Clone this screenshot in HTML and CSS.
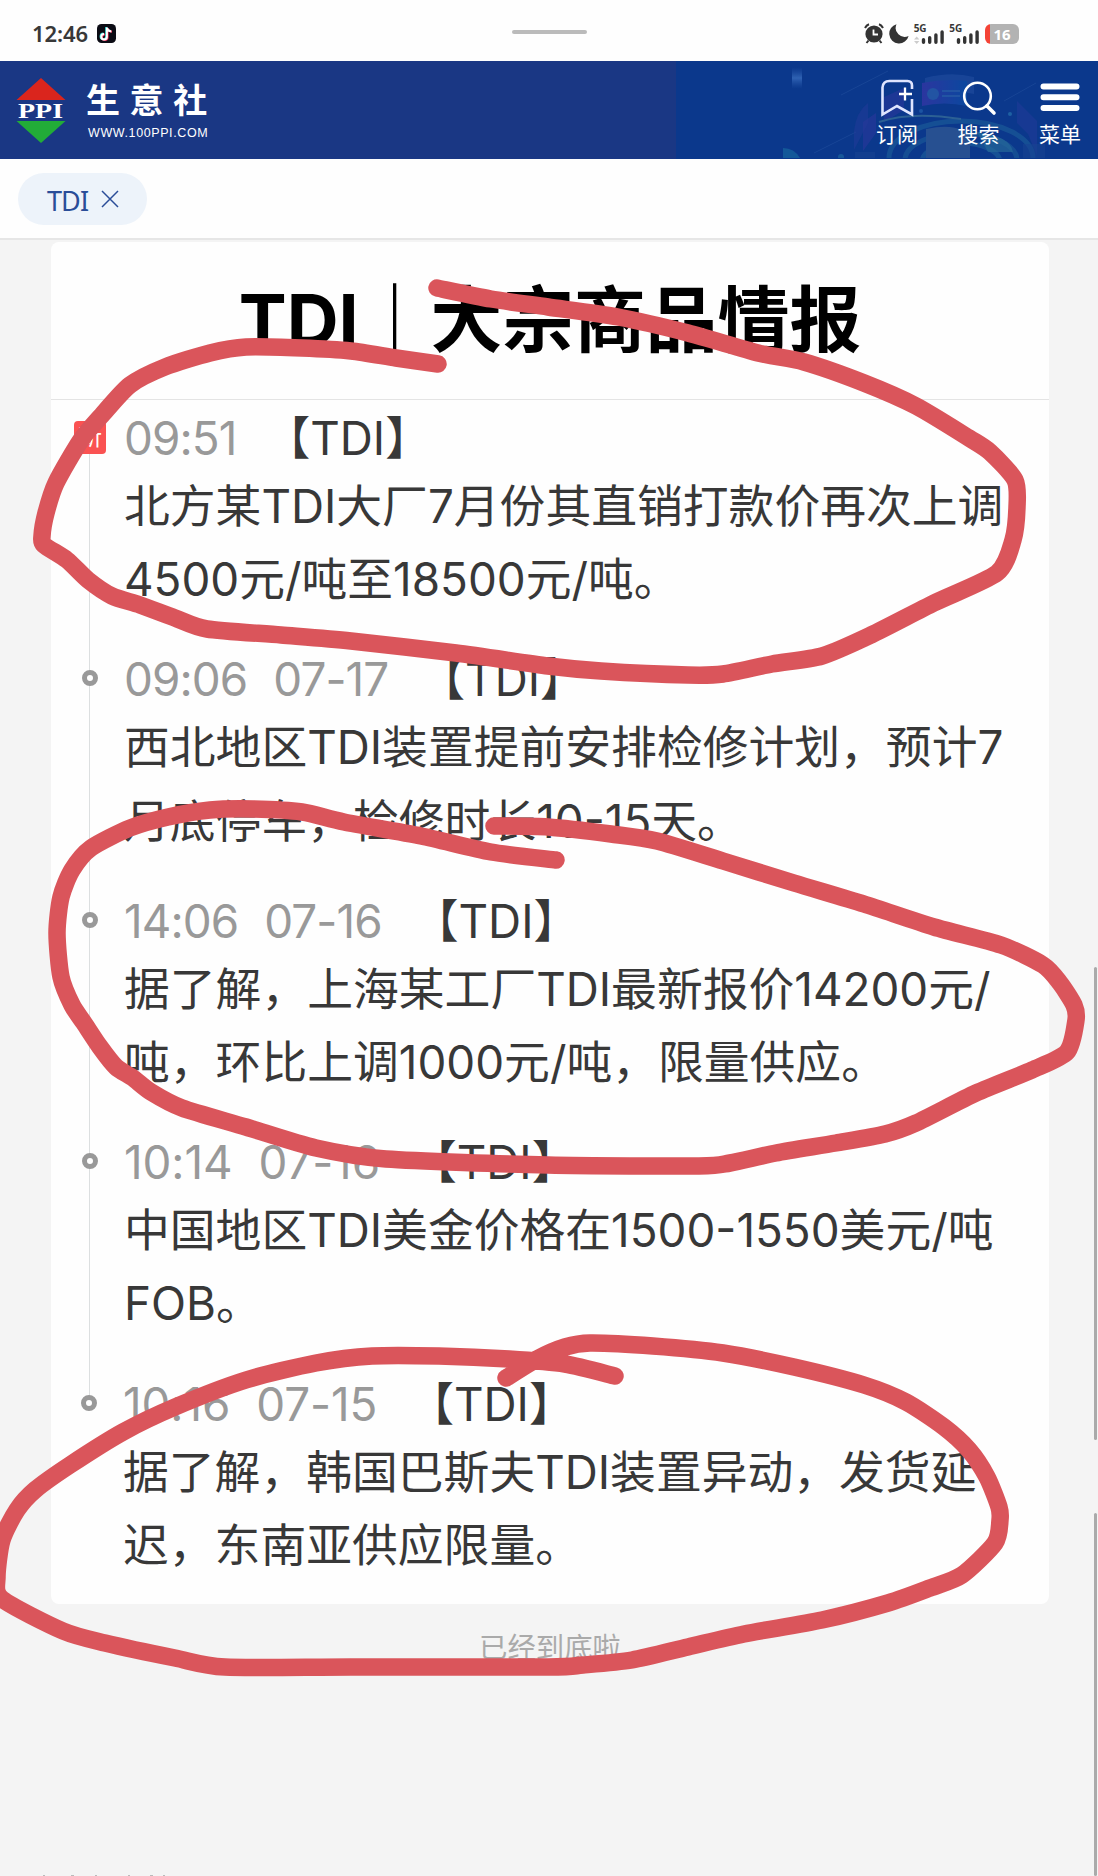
FILE: index.html
```
<!DOCTYPE html>
<html lang="zh-CN">

<head>
    <meta charset="UTF-8" />
    <meta name="viewport" content="width=device-width, initial-scale=1.0" />
    <title>TDI｜大宗商品情报</title>

    <link rel="stylesheet" href="styles.css">
</head>

<body>
    <div class="status-bar">
        <div class="status-left">
            <span class="clock">12:46</span>
            <svg class="app-icon" width="19" height="19" viewBox="0 0 19 19">
                <rect width="19" height="19" rx="4.5" fill="#0b0b14" />
                <g fill="none" stroke-width="2">
                    <path d="M9.200 3v9.400a2.800 2.800 0 1 1-2.800-2.800M9.200 3.500q.6 3 4.400 3.400" stroke="#35e0dc" />
                    <path d="M10.600 4v9.200a2.800 2.800 0 1 1-2.800-2.800M10.600 4.400q.6 3 4.400 3.400" stroke="#f0305a" />
                    <path d="M9.900 3.400v9.400a2.800 2.800 0 1 1-2.800-2.800M9.900 4q.6 3 4.400 3.400" stroke="#fff" />
                </g>
            </svg>
        </div>
        <span class="handle"></span>
        <div class="status-right">
            <svg width="20" height="21" viewBox="0 0 20 21">
                <circle cx="10" cy="11" r="8.6" fill="#333" />
                <path d="M1 5Q2.500 2 5 1.200M19 5Q17.500 2 15 1.200M4.500 17.500l-2 2.500M15.500 17.500l2 2.500" fill="none" stroke="#333" stroke-width="2" />
                <path d="M9.500 6.500v5h4.500" fill="none" stroke="#fff" stroke-width="1.800" />
            </svg>
            <svg width="20" height="21" viewBox="0 0 20 21">
                <path d="M7.500 1.200A9.800 9.800 0 1 0 19.600 13A9 9 0 0 1 7.500 1.200Z" fill="#333" />
            </svg>
            <div class="signal">
                <b>5G</b>
                <svg width="31" height="20" viewBox="0 0 31 20">
                    <path d="M0 15.500l2.700-3 2.700 3zM0 17l2.700 3 2.700-3z" fill="#ccc" />
                    <path d="M9.500 18.300v-2.500M15.700 18.300v-4.500M21.900 18.300V11M28.100 18.300V8" stroke="#333" stroke-width="3.400" stroke-linecap="round" />
                </svg>
            </div>
            <div class="signal">
                <b>5G</b>
                <svg width="31" height="20" viewBox="0 0 31 20">
                    <path d="M9.500 18.300v-2.500M15.700 18.300v-4.500M21.900 18.300V11M28.100 18.300V8" stroke="#333" stroke-width="3.400" stroke-linecap="round" />
                </svg>
            </div>
            <div class="battery">16</div>
        </div>
    </div>

    <header class="header">
        <div class="logo">
            <svg width="50" height="66" viewBox="0 0 50 66">
                <path d="M25 0L49.500 22H.5z" fill="#da251d" />
                <path d="M25 65L49.500 43H.5z" fill="#22ac38" />
                <text x="2" y="40" class="logo-ppi" textLength="45" lengthAdjust="spacingAndGlyphs">PPI</text>
            </svg>
            <div class="logo-text">
                <strong>生意社</strong>
                <span>WWW.100PPI.COM</span>
            </div>
        </div>
        <div class="header-right">
            <svg class="header-art" width="422" height="97" viewBox="0 0 422 97">
                <defs>
                    <linearGradient id="panel" x1="0" x2="1">
                        <stop offset="0" stop-color="#3a35a8" />
                        <stop offset="1" stop-color="#0b4fa8" />
                    </linearGradient>
                    <linearGradient id="glow" x1="0" y1="0" x2="0" y2="1">
                        <stop offset="0" stop-color="#2a5cb0" stop-opacity="0" />
                        <stop offset=".5" stop-color="#3f74c4" />
                        <stop offset="1" stop-color="#2a5cb0" stop-opacity="0" />
                    </linearGradient>
                </defs>
                <rect x="116" y="6" width="10" height="22" fill="url(#glow)" />
                <path d="M165 34L212 10M138 92L180 71M328 40L360 22" stroke="#2a56a4" stroke-opacity=".6" />
                <path d="M107 97V87a20 20 0 0 1 17 10z" fill="#17669f" />
                <path d="M249 17Q275 10 298 16V33Q272 27 249 33z" fill="#1e4a9c" />
                <path d="M246 22Q270 17 291 20V45Q268 40 246 45z" fill="url(#panel)" />
                <circle cx="257" cy="33" r="6" fill="#2c60ad" />
                <path d="M266 30h18M266 35h18" stroke="#2c60ad" stroke-width="2" />
                <path d="M208 36l20-9v22l-20 12zM187 61l13-9v20l-13 18z" fill="#32379f" opacity=".7" />
                <path d="M178 89V70Q180 51 192 42V62zM341 40l20 20v35l-9-22-11-11z" fill="#303c9f" opacity=".5" />
                <g fill="none" stroke="#246b9e" stroke-width="5">
                    <ellipse cx="285" cy="97" rx="72" ry="37" stroke-opacity=".65" />
                    <ellipse cx="285" cy="99" rx="56" ry="27" stroke-opacity=".6" />
                    <ellipse cx="285" cy="101" rx="39" ry="19" stroke-opacity=".7" />
                </g>
                <path d="M250 68q35-7 44 9v20h-44z" fill="#335b94" />
                <path d="M301 71q33 4 36 20h-25z" fill="#307da0" opacity=".7" />
                <path d="M203 61Q235 50 285 58" fill="none" stroke="#3a7198" stroke-width="2" />
                <circle cx="245" cy="50" r="2" fill="#235fac" />
                <circle cx="334" cy="53" r="2" fill="#2672ad" />
                <circle cx="165" cy="96" r="3" fill="#1d659f" />
                <path d="M179 91h20v6h-20zM347 83h22v14h-22z" fill="#1e4894" opacity=".6" />
            </svg>
            <nav class="nav">
                <a class="nav-item">
                    <svg width="40" height="40" viewBox="0 0 40 40">
                        <path d="M35 11V7.500Q35 3 30.500 3H12.500Q6 3 5.500 9.500V36.500L20 28l15 8.500V21" fill="none" stroke="#dfe5ff" stroke-width="2.600" />
                        <path d="M28 9.500v13M22 16h13" stroke="#fff" stroke-width="2.300" />
                    </svg>
                    <span>订阅</span>
                </a>
                <a class="nav-item">
                    <svg width="40" height="40" viewBox="0 0 40 40">
                        <circle cx="18.500" cy="18" r="13.300" fill="none" stroke="#fff" stroke-width="2.600" />
                        <path d="M28 28l7 7" stroke="#fff" stroke-width="3.600" stroke-linecap="round" />
                    </svg>
                    <span>搜索</span>
                </a>
                <a class="nav-item">
                    <svg width="40" height="40" viewBox="0 0 40 40">
                        <path d="M3.500 8.500h33M3.500 19.300h33M3.500 30h33" stroke="#fff" stroke-width="6" stroke-linecap="round" />
                    </svg>
                    <span>菜单</span>
                </a>
            </nav>
        </div>
    </header>

    <div class="filter-bar">
        <div class="chip">
            TDI
            <svg width="18" height="18" viewBox="0 0 18 18">
                <path d="M1 1l16 16M17 1L1 17" stroke="#2a4d98" stroke-width="1.500" />
            </svg>
        </div>
    </div>

    <main class="card">
        <h1>TDI｜大宗商品情报</h1>
        <ul class="timeline">
            <li class="item">
                <i class="badge-new">新</i>
                <div class="meta"><time>09:51</time><span>【TDI】</span></div>
                <p>北方某TDI大厂7月份其直销打款价再次上调<br>4500元/吨至18500元/吨。</p>
            </li>
            <li class="item">
                <i class="dot"></i>
                <div class="meta"><time>09:06</time><time>07-17</time><span>【TDI】</span></div>
                <p>西北地区TDI装置提前安排检修计划，预计7<br>月底停车，检修时长10-15天。</p>
            </li>
            <li class="item">
                <i class="dot"></i>
                <div class="meta"><time>14:06</time><time>07-16</time><span>【TDI】</span></div>
                <p>据了解，上海某工厂TDI最新报价14200元/<br>吨，环比上调1000元/吨，限量供应。</p>
            </li>
            <li class="item">
                <i class="dot"></i>
                <div class="meta meta-wide"><time>10:14</time><time>07-16</time><span>【TDI】</span></div>
                <p>中国地区TDI美金价格在1500-1550美元/吨<br>FOB。</p>
            </li>
            <li class="item item-last">
                <i class="dot"></i>
                <div class="meta meta-wide"><time>10:16</time><time>07-15</time><span>【TDI】</span></div>
                <p>据了解，韩国巴斯夫TDI装置异动，发货延<br>迟，东南亚供应限量。</p>
            </li>
        </ul>
    </main>
    <p class="end">已经到底啦</p>

    <span class="scrollbar scrollbar-top"></span>
    <span class="scrollbar scrollbar-bottom"></span>

    <!-- top edge of the line cut off by the screen -->
    <svg class="cut-line" width="180" height="1" viewBox="0 0 180 1">
        <path d="M43 .5h2M71 .5h3M95 .5h2M128 .5h2M150 .5h3M163 .5h2" stroke="#bbb" />
    </svg>

    <!-- red pen marks -->
    <svg class="marks" width="1098" height="1876" viewBox="0 0 1098 1876">
        <path data-points="437,288 491,299 548,307 618,317 688,333 758,353 804,362 864,383 916,406 969,438 990,452 1015,480 1017,507 1013,540 997,573 934,603 871,635 822,656 772,664 723,674 688,675 601,671 548,666 456,653 351,641 281,635 207,629 175,618 140,605 112,596 88,580 67,560 44,545 42,536 46,513 56,483 81,440 102,415 130,385 165,367 210,353 246,347 302,348 351,351 396,358 438,364" />
        <path data-points="494,826 548,827 611,834 657,841 723,861 794,883 864,904 934,927 1001,945 1043,965 1060,983 1074,1005 1076,1020 1067,1052 1032,1070 976,1093 916,1123 885,1134 836,1143 776,1153 730,1163 699,1166 548,1165 386,1159 316,1148 246,1127 182,1108 151,1092 133,1078 116,1067 100,1047 84,1023 72,1005 61,977 57,933 61,897 72,870 91,848 130,828 168,817 210,810 253,809 302,812 344,822 421,836 491,852 556,860" />
        <path data-points="506,1378 537,1359 565,1347 590,1343 653,1346 723,1353 794,1367 864,1385 906,1402 944,1427 969,1450 987,1477 999,1507 1000,1520 995,1543 962,1575 930,1588 888,1603 822,1620 744,1634 688,1647 632,1660 583,1665 548,1667 351,1667 225,1667 175,1658 105,1643 63,1631 2,1599 -3,1577 2,1540 17,1510 35,1490 70,1465 123,1432 175,1407 246,1380 316,1363 372,1356 439,1356 509,1359 565,1364 615,1376" />
    </svg>

    <script>
        // draw every pen mark as a smooth curve through its points
        document.querySelectorAll(".marks path").forEach(function(path) {
            const p = path.dataset.points.split(" ").map(s => s.split(",").map(Number));
            let d = "M" + p[0];
            for (let i = 0; i < p.length - 1; i++) {
                const a = p[i - 1] || p[i];
                const b = p[i];
                const c = p[i + 1];
                const e = p[i + 2] || c;
                d += "C" + [b[0] + (c[0] - a[0]) / 8, b[1] + (c[1] - a[1]) / 8,
                    c[0] - (e[0] - b[0]) / 8, c[1] - (e[1] - b[1]) / 8, c[0], c[1]
                ].join(" ");
            }
            path.setAttribute("d", d);
        });
    </script>
</body>

</html>
```
FILE: styles.css
```
* {
    box-sizing: border-box;
}

body {
    position: relative;
    margin: 0;
    height: 1876px;
    overflow: hidden;
    background-color: #f4f4f4;
    color: #383838;
    font-family: Inter, "Noto Sans CJK SC", sans-serif;
}

svg {
    display: block;
}

.status-bar {
    display: grid;
    grid-template-columns: 1fr 75px 1fr;
    align-items: center;
    height: 61px;
    padding: 6px 79px 0 32px;
    background-color: #fefefe;
}

.status-left,
.status-right {
    display: flex;
    align-items: center;
}

.status-left {
    width: 480px;
    gap: 7px;
}

.clock {
    width: 58px;
    font: 600 22px/24px "Noto Sans", sans-serif;
    letter-spacing: -0.1px;
    white-space: nowrap;
    padding-bottom: 1px;
}

.handle {
    height: 4px;
    margin-bottom: 4px;
    border-radius: 2px;
    background-color: #bbb;
}

.status-right {
    justify-content: flex-end;
    gap: 4.7px;
}

.signal {
    position: relative;
    width: 31px;
}

.signal b {
    position: absolute;
    top: -2px;
    left: 0;
    font: 700 10px/12px "Noto Sans", sans-serif;
}

.battery {
    width: 34px;
    height: 20px;
    border-radius: 6px;
    background: linear-gradient(90deg, #f44336 5px, #b3b3b3 5px);
    color: #fff;
    font: 700 15px/20px "Noto Sans", sans-serif;
    text-align: center;
}

.header {
    display: flex;
    height: 98px;
    background-color: #1a3784;
}

.logo {
    display: flex;
    width: 676px;
    padding: 17px 0 0 16px;
    gap: 20px;
}

.logo-ppi {
    fill: #fff;
    font: 700 20px "Liberation Serif", serif;
}

.logo-text {
    color: #fff;
}

.logo-text strong {
    display: block;
    margin-top: 3px;
    font-size: 34px;
    font-weight: 700;
    line-height: 40px;
    letter-spacing: 9.6px;
}

.logo-text span {
    display: block;
    margin: 4px 0 0 2px;
    font: 12.5px/16px "Liberation Sans", sans-serif;
    letter-spacing: 0.6px;
}

.header-right {
    position: relative;
    flex: 1;
    background-color: #0b388c;
}

.header-art {
    position: absolute;
    top: 0;
    right: 0;
    opacity: 0.7;
}

.nav {
    position: relative;
    display: flex;
    justify-content: flex-end;
    gap: 31.5px;
    padding: 17px 13px 0 0;
}

.nav-item {
    display: flex;
    flex-direction: column;
    align-items: center;
    width: 50px;
    color: #fff;
    font-size: 21px;
    line-height: 34px;
    white-space: nowrap;
}

.filter-bar {
    height: 81px;
    padding: 14px 18px;
    border-bottom: 2px solid #e6e6e6;
    background-color: #fefefe;
}

.chip {
    display: flex;
    gap: 13px;
    width: 129px;
    height: 52px;
    padding-left: 29px;
    border-radius: 26px;
    background-color: #edf3fa;
    color: #2a4d98;
    font: 27px/56px "Noto Sans", sans-serif;
    letter-spacing: -0.9px;
}

.chip svg {
    margin-top: 17px;
}

.card {
    width: 998px;
    height: 1362px;
    margin: 2px 0 0 51px;
    border-radius: 8px;
    background-color: #fefefe;
}

.card h1 {
    height: 158px;
    margin: 0;
    border-bottom: 1px solid #e4e4e4;
    color: #000;
    font-size: 71.8px;
    font-weight: 700;
    line-height: 155px;
    text-align: center;
    white-space: nowrap;
}

.timeline {
    margin: 0;
    padding: 8px 0 0 73px;
    list-style: none;
}

.item {
    position: relative;
    height: 241.4px;
    font-size: 45.8px;
    white-space: nowrap;
}

.item::before {
    content: "";
    position: absolute;
    top: 30px;
    left: -35px;
    width: 1px;
    height: 241px;
    background-color: #dcdfe0;
}

.item-last {
    margin-left: -1px;
}

.item-last::before {
    display: none;
}

.meta {
    display: flex;
    gap: 26px;
    height: 60px;
    line-height: 62px;
}

.meta time {
    color: #999;
    letter-spacing: -0.9px;
}

.meta span {
    margin-left: 5px;
}

.meta-wide time {
    letter-spacing: -0.1px;
}

.meta time:first-child + span {
    margin-left: 2px;
}

.item p {
    margin: 2px 0 0;
    line-height: 73.3px;
}

.badge-new {
    position: absolute;
    z-index: 1;
    top: 13px;
    left: -50px;
    width: 32px;
    height: 33px;
    border-radius: 4px;
    background-color: #fa5252;
    color: #fff;
    font-size: 24px;
    font-style: normal;
    line-height: 32px;
    text-align: center;
}

.dot {
    position: absolute;
    z-index: 1;
    top: 21px;
    left: -42px;
    width: 16px;
    height: 16px;
    border: 5px solid #999;
    border-radius: 50%;
    background-color: #fff;
}

.end {
    margin: 24px 0 0 2px;
    color: #aaa;
    font-size: 28.4px;
    line-height: 40px;
    text-align: center;
}

.scrollbar {
    position: absolute;
    right: 1px;
    width: 3px;
    border-radius: 2px;
    background-color: #aaa;
}

.scrollbar-top {
    top: 967px;
    height: 473px;
}

.scrollbar-bottom {
    top: 1513px;
    bottom: 0;
}

.cut-line {
    position: absolute;
    bottom: 0;
    left: 0;
}

.marks {
    position: absolute;
    top: 0;
    left: 0;
    z-index: 2;
    fill: none;
    stroke: #da555b;
    stroke-width: 17.5;
    stroke-linecap: round;
    stroke-linejoin: round;
}
```
